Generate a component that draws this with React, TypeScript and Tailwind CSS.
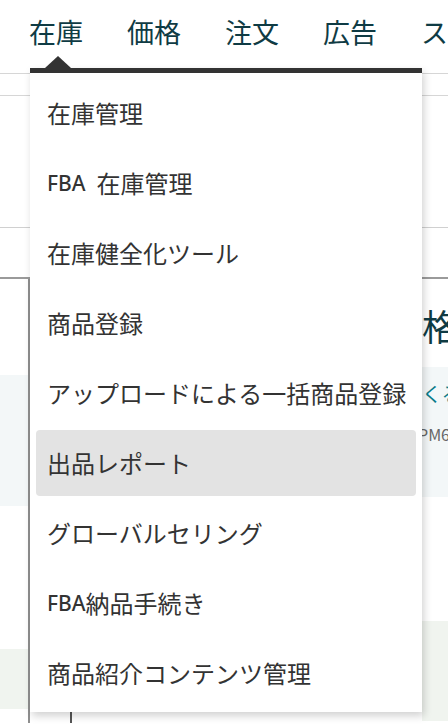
import React from 'react';

const navItems = ['在庫', '価格', '注文', '広告', 'スト'];

const menuItems: { label: React.ReactNode; active?: boolean }[] = [
  { label: '在庫管理' },
  {
    label: (
      <>
        <span className="font-[family-name:Noto_Sans,sans-serif] text-[21px] font-medium mr-[11px]">FBA</span>
        在庫管理
      </>
    ),
  },
  { label: '在庫健全化ツール' },
  { label: '商品登録' },
  { label: 'アップロードによる一括商品登録' },
  { label: '出品レポート', active: true },
  { label: 'グローバルセリング' },
  {
    label: (
      <>
        <span className="font-[family-name:Noto_Sans,sans-serif] text-[21px] font-medium">FBA</span>
        納品手続き
      </>
    ),
  },
  { label: '商品紹介コンテンツ管理' },
];

const DropdownMenu = () => (
  <div className="absolute left-[30px] top-[68px] w-[392px]">
    {/* caret above the menu */}
    <div className="absolute left-[15px] -top-[12px] w-0 h-0 border-l-[13px] border-r-[13px] border-b-[12px] border-l-transparent border-r-transparent border-b-[#333]" />
    <div className="bg-white border-t-[5px] border-[#333] shadow-[2px_4px_8px_rgba(0,0,0,0.18)] pt-[7px] pb-[6px] px-[6px] flex flex-col gap-[4px]">
      {menuItems.map((item, i) => (
        <div
          key={i}
          className={`h-[66px] rounded-[4px] pl-[11px] flex items-center text-[24px] leading-none text-[#333] whitespace-nowrap ${
            item.active ? 'bg-[#e3e3e3]' : ''
          }`}
        >
          {item.label}
        </div>
      ))}
    </div>
  </div>
);

export default function App() {
  return (
    <div className="relative w-[448px] h-[724px] overflow-hidden bg-white font-[family-name:Noto_Sans_CJK_JP,sans-serif]">
      {/* top navigation */}
      <div className="h-[74px] border-b border-[#d6d6d6] flex items-start pt-[14px] pl-[29px] gap-[44px] text-[27px] leading-[36px] text-[#0f3b44] whitespace-nowrap overflow-hidden">
        {navItems.map((n) => (
          <span key={n} className="shrink-0">{n}</span>
        ))}
      </div>
      <div className="h-[22px] border-b border-[#d6d6d6]" />
      <div className="h-[132px] border-b border-[#d0d0d0]" />
      <div className="h-[51px] border-b-2 border-[#9a9a9a]" />

      {/* page body */}
      <div className="flex h-[444px]">
        <div className="w-[28px] shrink-0 flex flex-col">
          <div className="h-[96px]" />
          <div className="h-[131px] bg-[#f3f7f8]" />
          <div className="h-[143px]" />
          <div className="h-[60px] bg-[#f0f4ef]" />
        </div>
        <div className="w-[2px] shrink-0 bg-[#8f8f8f]" />
        <div className="w-[392px] shrink-0 flex flex-col">
          <div className="h-[432px]" />
          <div className="flex-1 ml-[40px] border-l-2 border-[#555]" />
        </div>
        <div className="flex-1 min-w-0 overflow-hidden flex flex-col">
          <div className="h-[88px] pt-[26px] text-[36px] leading-[40px] text-[#0f3b44] whitespace-nowrap">格</div>
          <div className="h-[130px] bg-[#f3f7f8] pt-[15px] whitespace-nowrap">
            <div className="text-[20px] leading-[24px] text-[#0a7b8a]">くる</div>
            <div className="text-[16px] leading-[20px] text-[#666] mt-[18px] -ml-[4px]">PM6</div>
          </div>
          <div className="h-[124px]" />
          <div className="h-[100px] bg-[#f0f4ef]" />
        </div>
      </div>

      <DropdownMenu />
    </div>
  );
}
